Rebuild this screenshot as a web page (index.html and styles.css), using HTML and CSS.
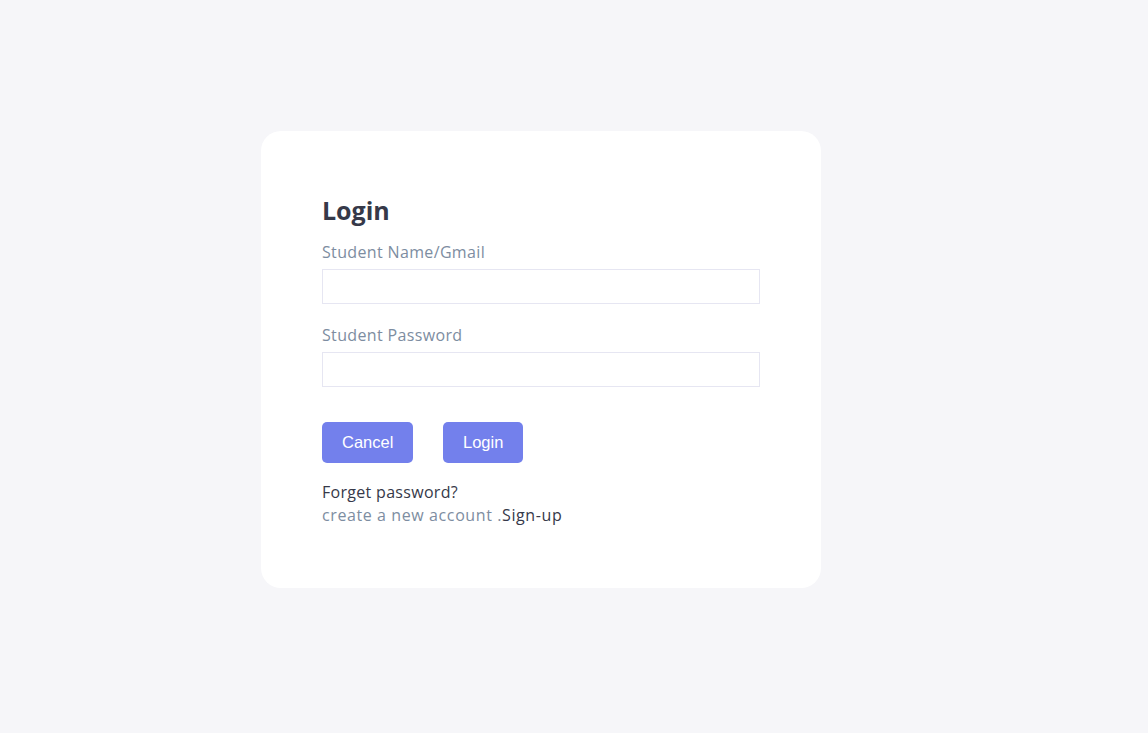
FILE: index.html
```html
<!DOCTYPE html>
<html lang="en">
<head>
<meta charset="utf-8">
<title>Login</title>
<link rel="stylesheet" href="styles.css">
</head>
<body>
<main class="page">
  <form class="card">
    <h2 class="title">Login</h2>
    <label class="field">
      <span class="label">Student Name/Gmail</span>
      <input class="input" type="text">
    </label>
    <label class="field">
      <span class="label">Student Password</span>
      <input class="input" type="password">
    </label>
    <div class="actions">
      <button type="button" class="btn btn-cancel">Cancel</button>
      <button type="button" class="btn btn-login">Login</button>
    </div>
    <p class="forget">Forget password?</p>
    <p class="signup"><span class="muted">create a new account .</span>Sign-up</p>
  </form>
</main>
</body>
</html>
```
FILE: styles.css
```css
* { box-sizing: border-box; }
html, body { margin: 0; height: 100%; }
body {
  background: #f6f6f9;
  font-family: "Open Sans", "Noto Sans", sans-serif;
  color: #363949;
}
.page {
  padding: 131px 0 0 261px;
}
.card {
  width: 560px;
  height: 457px;
  background: #fff;
  border-radius: 20px;
  padding: 61px 61px 0 61px;
  display: flex;
  flex-direction: column;
}
.title {
  margin: 0 0 13px;
  font-size: 25px;
  font-weight: 700;
  line-height: 36px;
  color: #363949;
}
.field {
  display: flex;
  flex-direction: column;
  margin-bottom: 20px;
}
.label {
  font-size: 16px;
  line-height: 22px;
  letter-spacing: 0.35px;
  color: #7d8da1;
  margin-bottom: 6px;
}
.input {
  width: 438px;
  height: 35px;
  border: 1px solid #e6e6f2;
  border-radius: 0;
  outline: none;
  background: #fff;
}
.actions {
  display: flex;
  gap: 30px;
  margin-top: 15px;
}
.btn {
  height: 41px;
  border: none;
  border-radius: 5px;
  background: #7380ec;
  color: #fff;
  font-family: "Liberation Sans", Arial, sans-serif;
  font-size: 16.5px;
  padding: 0 20px;
}
.btn-cancel { width: 91px; }
.btn-login { width: 80px; }
.forget {
  margin: 18px 0 0;
  font-size: 16px;
  line-height: 23px;
  letter-spacing: 0.3px;
  color: #363949;
}
.signup {
  margin: 0;
  font-size: 16px;
  line-height: 23px;
  letter-spacing: 0.6px;
  color: #363949;
}
.muted { color: #7d8da1; }
```
